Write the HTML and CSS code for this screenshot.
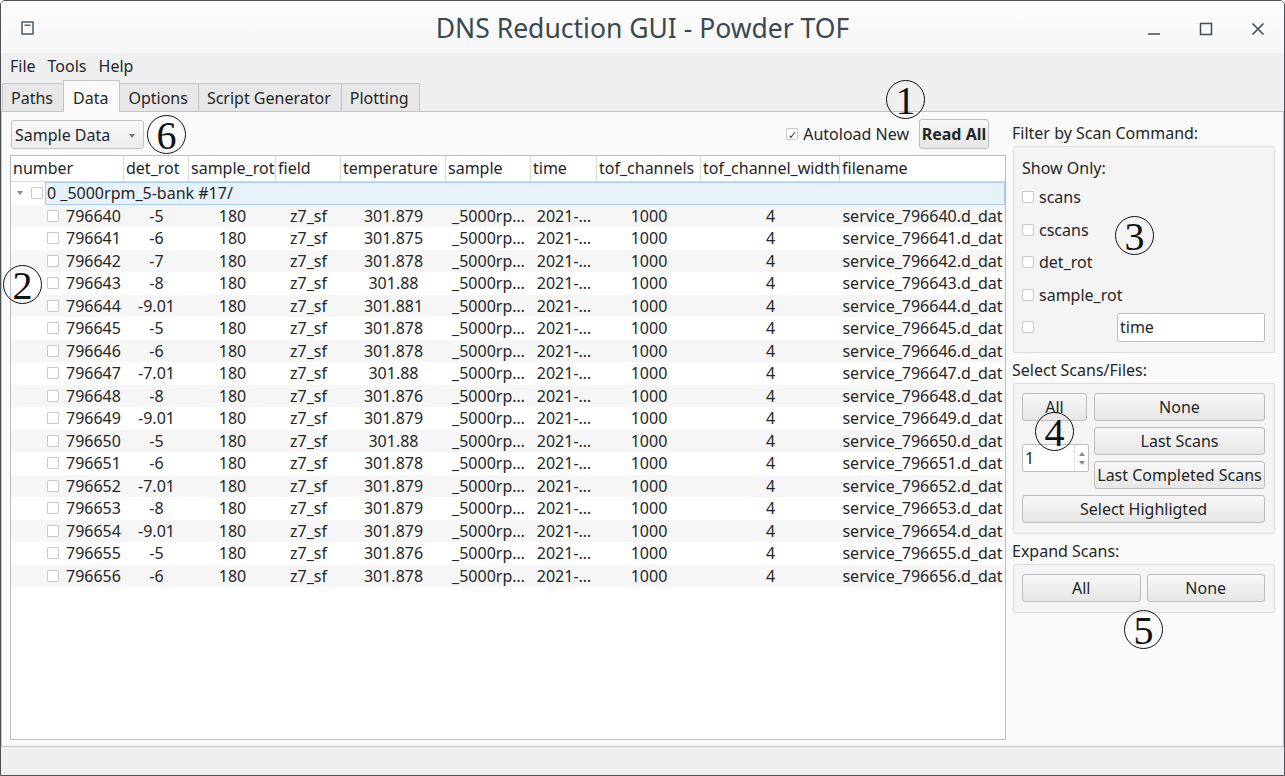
FILE: index.html
```html
<!DOCTYPE html>
<html>
<head>
<meta charset="utf-8">
<title>DNS Reduction GUI - Powder TOF</title>
<link rel="stylesheet" href="styles.css">
</head>
<body>
<div class="window">
  <div class="titlebar">
    <div class="tb-left">
      <svg class="appicon" width="13" height="14" viewBox="0 0 13 14"><rect x="1" y="1" width="11" height="12" fill="#fafafa" stroke="#56656d" stroke-width="1.6"/><line x1="3.5" y1="4.2" x2="9.5" y2="4.2" stroke="#56656d" stroke-width="1.6"/></svg>
    </div>
    <div class="title">DNS Reduction GUI - Powder TOF</div>
    <div class="tb-right">
      <div class="ctl"><svg width="14" height="14" viewBox="0 0 14 14"><line x1="1" y1="12" x2="13" y2="12" stroke="#3e4b53" stroke-width="1.5"/></svg></div>
      <div class="ctl"><svg width="14" height="14" viewBox="0 0 14 14"><rect x="1.5" y="1.5" width="11" height="11" fill="none" stroke="#3e4b53" stroke-width="1.5"/></svg></div>
      <div class="ctl"><svg width="14" height="14" viewBox="0 0 14 14"><path d="M1.5 1.5 L12.5 12.5 M12.5 1.5 L1.5 12.5" stroke="#3e4b53" stroke-width="1.6"/></svg></div>
    </div>
  </div>
  <div class="menubar"><span>File</span><span>Tools</span><span>Help</span></div>
  <div class="tabbar">
    <div class="tab">Paths</div>
    <div class="tab active">Data</div>
    <div class="tab">Options</div>
    <div class="tab">Script Generator</div>
    <div class="tab">Plotting</div>
  </div>
  <div class="pane">
    <div class="left">
      <div class="toolbar">
        <div class="combo">Sample Data<span class="carrow"></span></div>
        <div class="spacer"></div>
        <div class="autoload"><span class="cb checked">✓</span>Autoload New</div>
        <div class="btn readall">Read All</div>
      </div>
      <div class="tree">
        <div class="r hdr">
          <div>number</div><div>det_rot</div><div>sample_rot</div><div>field</div><div>temperature</div><div>sample</div><div>time</div><div>tof_channels</div><div>tof_channel_width</div><div>filename</div>
        </div>
        <div class="grp"><span class="garrow"></span><i class="cb"></i><div class="gsel">0 _5000rpm_5-bank #17/</div></div>
        <div class="r alt"><div class="num"><i class="cb"></i>796640</div><div>-5</div><div>180</div><div>z7_sf</div><div>301.879</div><div>_5000rp…</div><div>2021-…</div><div>1000</div><div>4</div><div>service_796640.d_dat</div></div>
        <div class="r"><div class="num"><i class="cb"></i>796641</div><div>-6</div><div>180</div><div>z7_sf</div><div>301.875</div><div>_5000rp…</div><div>2021-…</div><div>1000</div><div>4</div><div>service_796641.d_dat</div></div>
        <div class="r alt"><div class="num"><i class="cb"></i>796642</div><div>-7</div><div>180</div><div>z7_sf</div><div>301.878</div><div>_5000rp…</div><div>2021-…</div><div>1000</div><div>4</div><div>service_796642.d_dat</div></div>
        <div class="r"><div class="num"><i class="cb"></i>796643</div><div>-8</div><div>180</div><div>z7_sf</div><div>301.88</div><div>_5000rp…</div><div>2021-…</div><div>1000</div><div>4</div><div>service_796643.d_dat</div></div>
        <div class="r alt"><div class="num"><i class="cb"></i>796644</div><div>-9.01</div><div>180</div><div>z7_sf</div><div>301.881</div><div>_5000rp…</div><div>2021-…</div><div>1000</div><div>4</div><div>service_796644.d_dat</div></div>
        <div class="r"><div class="num"><i class="cb"></i>796645</div><div>-5</div><div>180</div><div>z7_sf</div><div>301.878</div><div>_5000rp…</div><div>2021-…</div><div>1000</div><div>4</div><div>service_796645.d_dat</div></div>
        <div class="r alt"><div class="num"><i class="cb"></i>796646</div><div>-6</div><div>180</div><div>z7_sf</div><div>301.878</div><div>_5000rp…</div><div>2021-…</div><div>1000</div><div>4</div><div>service_796646.d_dat</div></div>
        <div class="r"><div class="num"><i class="cb"></i>796647</div><div>-7.01</div><div>180</div><div>z7_sf</div><div>301.88</div><div>_5000rp…</div><div>2021-…</div><div>1000</div><div>4</div><div>service_796647.d_dat</div></div>
        <div class="r alt"><div class="num"><i class="cb"></i>796648</div><div>-8</div><div>180</div><div>z7_sf</div><div>301.876</div><div>_5000rp…</div><div>2021-…</div><div>1000</div><div>4</div><div>service_796648.d_dat</div></div>
        <div class="r"><div class="num"><i class="cb"></i>796649</div><div>-9.01</div><div>180</div><div>z7_sf</div><div>301.879</div><div>_5000rp…</div><div>2021-…</div><div>1000</div><div>4</div><div>service_796649.d_dat</div></div>
        <div class="r alt"><div class="num"><i class="cb"></i>796650</div><div>-5</div><div>180</div><div>z7_sf</div><div>301.88</div><div>_5000rp…</div><div>2021-…</div><div>1000</div><div>4</div><div>service_796650.d_dat</div></div>
        <div class="r"><div class="num"><i class="cb"></i>796651</div><div>-6</div><div>180</div><div>z7_sf</div><div>301.878</div><div>_5000rp…</div><div>2021-…</div><div>1000</div><div>4</div><div>service_796651.d_dat</div></div>
        <div class="r alt"><div class="num"><i class="cb"></i>796652</div><div>-7.01</div><div>180</div><div>z7_sf</div><div>301.879</div><div>_5000rp…</div><div>2021-…</div><div>1000</div><div>4</div><div>service_796652.d_dat</div></div>
        <div class="r"><div class="num"><i class="cb"></i>796653</div><div>-8</div><div>180</div><div>z7_sf</div><div>301.879</div><div>_5000rp…</div><div>2021-…</div><div>1000</div><div>4</div><div>service_796653.d_dat</div></div>
        <div class="r alt"><div class="num"><i class="cb"></i>796654</div><div>-9.01</div><div>180</div><div>z7_sf</div><div>301.879</div><div>_5000rp…</div><div>2021-…</div><div>1000</div><div>4</div><div>service_796654.d_dat</div></div>
        <div class="r"><div class="num"><i class="cb"></i>796655</div><div>-5</div><div>180</div><div>z7_sf</div><div>301.876</div><div>_5000rp…</div><div>2021-…</div><div>1000</div><div>4</div><div>service_796655.d_dat</div></div>
        <div class="r alt"><div class="num"><i class="cb"></i>796656</div><div>-6</div><div>180</div><div>z7_sf</div><div>301.878</div><div>_5000rp…</div><div>2021-…</div><div>1000</div><div>4</div><div>service_796656.d_dat</div></div>
      </div>
    </div>
    <div class="right">
      <div class="rlabel">Filter by Scan Command:</div>
      <div class="group g1">
        <div class="showonly">Show Only:</div>
        <div class="crow"><i class="cb"></i><span>scans</span></div>
        <div class="crow"><i class="cb"></i><span>cscans</span></div>
        <div class="crow"><i class="cb"></i><span>det_rot</span></div>
        <div class="crow"><i class="cb"></i><span>sample_rot</span></div>
        <div class="crow"><i class="cb"></i><div class="ledit">time</div></div>
      </div>
      <div class="rlabel mt">Select Scans/Files:</div>
      <div class="group g2">
        <div class="btn b-all">All</div>
        <div class="btn b-none">None</div>
        <div class="spin"><span class="sval">1</span><span class="sarrows"><i class="up"></i><i class="dn"></i></span></div>
        <div class="btn b-last">Last Scans</div>
        <div class="btn b-lastc">Last Completed Scans</div>
        <div class="btn b-sel">Select Highligted</div>
      </div>
      <div class="rlabel mt">Expand Scans:</div>
      <div class="group g3">
        <div class="btn">All</div>
        <div class="btn">None</div>
      </div>
    </div>
  </div>
  <div class="statusbar"></div>
  <div class="anno a1">1</div>
  <div class="anno a2">2</div>
  <div class="anno a3">3</div>
  <div class="anno a4">4</div>
  <div class="anno a5">5</div>
  <div class="anno a6">6</div>
</div>
</body>
</html>
```
FILE: styles.css
```css
* { box-sizing: border-box; margin: 0; padding: 0; }
body {
  margin: 0;
  background: #ffffff;
  font-family: "Noto Sans", sans-serif;
  font-size: 16px;
  color: #232627;
}
.window {
  position: relative;
  width: 1285px;
  height: 776px;
  border: 1px solid #4d5257;
  border-radius: 5px 5px 0 0;
  display: flex;
  flex-direction: column;
  background: #efefef;
  overflow: hidden;
}
.titlebar {
  height: 52px;
  flex: none;
  display: grid;
  grid-template-columns: 1fr auto 1fr;
  align-items: center;
  background: linear-gradient(#fdfdfd, #f6f6f6);
}
.tb-left { padding-left: 20px; display: flex; align-items: center; }
.appicon { display: block; margin-top: 2px; }
.title {
  font-size: 26.5px;
  color: #394851;
  padding-top: 1px;
}
.tb-right { display: flex; justify-content: flex-end; }
.ctl { width: 52px; height: 52px; display: flex; align-items: center; justify-content: center; padding-top: 4px; }
.ctl svg { display: block; }
.menubar {
  height: 27px;
  flex: none;
  display: flex;
  padding-left: 3px;
  align-items: center;
  background: #efefef;
}
.menubar span { padding: 0 6px; line-height: 27px; }
.tabbar {
  height: 31px;
  flex: none;
  display: flex;
  align-items: flex-end;
  padding-left: 1px;
  background: #efefef;
}
.tab {
  height: 28px;
  padding: 0 10px 0 8px;
  border: 1px solid #c5c5c5;
  border-bottom: none;
  background: #e7e7e7;
  display: flex;
  align-items: center;
  margin-right: -1px;
}
.tab.active {
  height: 32px;
  margin-bottom: -1px;
  background: #fafafa;
  position: relative;
  z-index: 1;
  padding: 2px 11px 0 9px;
}
.pane {
  height: 636px;
  flex: none;
  border: 1px solid #c3c3c3;
  background: #fafafa;
  display: flex;
}
.left {
  width: 1004px;
  flex: none;
  padding: 7px 0 6px 8px;
  display: flex;
  flex-direction: column;
  gap: 6px;
}
.toolbar { height: 30px; display: flex; align-items: center; }
.combo {
  margin-left: 1px;
  width: 133px;
  height: 29px;
  margin-top: 1px;
  border: 1px solid #c2c2c2;
  border-radius: 3px;
  background: linear-gradient(#f9f9f9, #ececec);
  padding-left: 3px;
  display: flex;
  align-items: center;
  position: relative;
}
.carrow {
  position: absolute;
  right: 8px;
  top: 13px;
  border-left: 3px solid transparent;
  border-right: 3px solid transparent;
  border-top: 4px solid #777;
}
.spacer { flex: 1; }
.autoload { display: flex; align-items: center; margin-right: 10px; }
.autoload .cb { margin-right: 5px; }
.cb {
  display: inline-flex;
  width: 12px;
  height: 12px;
  border: 1px solid #c9c9c9;
  background: #fff;
  border-radius: 1px;
  flex: none;
  align-items: center;
  justify-content: center;
  font-size: 11px;
  line-height: 1;
  color: #333;
  font-style: normal;
}
.btn {
  height: 28px;
  border: 1px solid #bdbdbd;
  border-radius: 3px;
  background: linear-gradient(#f7f7f7, #e6e6e6);
  display: flex;
  align-items: center;
  justify-content: center;
  white-space: nowrap;
}
.readall {
  width: 70px;
  height: 30px;
  font-weight: bold;
  margin-right: 17px;
}
.tree {
  height: 585px;
  width: 996px;
  border: 1px solid #bcbcbc;
  background: #fff;
}
.r {
  display: grid;
  grid-template-columns: 113px 65px 87px 65px 105px 85px 66px 104px 139px 165px;
  height: 22.5px;
  align-items: center;
  text-align: center;
  white-space: nowrap;
}
.r.alt { background: #f6f6f6; }
.r.hdr {
  height: 26px;
  text-align: left;
  border-bottom: 1px solid #dadada;
  align-items: stretch;
}
.r.hdr > div {
  border-right: 1px solid #dadada;
  padding-left: 2px;
  padding-bottom: 1px;
  display: flex;
  align-items: center;
  overflow: hidden;
}
.r.hdr > div:last-child { border-right: none; }
.r .num {
  display: flex;
  align-items: center;
  padding-left: 36px;
  text-align: left;
}
.r .num .cb { margin-right: 7px; }
.grp {
  height: 22.5px;
  display: flex;
  align-items: center;
  padding-left: 6px;
}
.garrow {
  width: 0;
  height: 0;
  border-left: 3px solid transparent;
  border-right: 3px solid transparent;
  border-top: 4px solid #888;
  margin-right: 8px;
}
.grp .cb { margin-right: 2px; }
.gsel {
  flex: 1;
  height: 23px;
  border: 1px solid #a9cdec;
  background: #e8f2fb;
  display: flex;
  align-items: center;
  padding-left: 1px;
}
.right {
  flex: 1;
  padding: 8px 8px 0 6px;
  display: flex;
  flex-direction: column;
}
.rlabel { height: 26px; display: flex; align-items: center; }
.rlabel.mt { margin-top: 4px; }
.group {
  margin-left: 1px;
  border: 1px solid #dcdcdc;
  border-radius: 2px;
  background: #f4f4f4;
}
.g1 {
  height: 207px;
  padding: 8px 9px 0 8px;
  display: flex;
  flex-direction: column;
}
.showonly { height: 26px; display: flex; align-items: center; }
.crow { height: 32.5px; display: flex; align-items: center; }
.crow span { margin-left: 5px; }
.ledit {
  margin-left: auto;
  width: 148px;
  height: 29px;
  background: #fff;
  border: 1px solid #bdbdbd;
  border-radius: 2px;
  padding-left: 2px;
  display: flex;
  align-items: center;
}
.g2 {
  height: 151px;
  padding: 9px 9px 9px 8px;
  display: grid;
  grid-template-columns: 67px 1fr;
  grid-template-rows: 28px 28px 28px 28px;
  column-gap: 5px;
  row-gap: 6px;
}
.b-all { grid-row: 1; grid-column: 1; width: 65px; }
.b-none { grid-row: 1; grid-column: 2; }
.b-last { grid-row: 2; grid-column: 2; }
.b-lastc { grid-row: 3; grid-column: 2; }
.b-sel { grid-row: 4; grid-column: 1 / 3; }
.spin {
  grid-row: 2 / 4;
  grid-column: 1;
  align-self: center;
  height: 28px;
  background: #fff;
  border: 1px solid #bdbdbd;
  border-radius: 2px;
  display: flex;
}
.sval { flex: 1; padding-left: 2px; display: flex; align-items: center; }
.sarrows {
  width: 14px;
  border-left: 1px solid #e0e0e0;
  display: flex;
  flex-direction: column;
  align-items: center;
  justify-content: center;
  gap: 5px;
}
.sarrows .up {
  border-left: 3px solid transparent;
  border-right: 3px solid transparent;
  border-bottom: 4px solid #888;
}
.sarrows .dn {
  border-left: 3px solid transparent;
  border-right: 3px solid transparent;
  border-top: 4px solid #888;
}
.g3 {
  height: 49px;
  padding: 9px 9px 0 8px;
  display: flex;
  gap: 6px;
}
.g3 .btn { flex: 1; }
.statusbar { flex: 1; background: #efefef; }
.anno {
  position: absolute;
  width: 39px;
  height: 39px;
  border: 1.5px solid #111;
  border-radius: 50%;
  font-family: "Liberation Serif", serif;
  font-size: 40px;
  line-height: 1;
  color: #111;
  display: flex;
  align-items: center;
  justify-content: center;
  padding-top: 3px;
}
.a1 { left: 885px; top: 79px; }
.a2 { left: 2px; top: 264px; }
.a3 { left: 1114px; top: 215px; }
.a4 { left: 1034px; top: 411px; }
.a5 { left: 1123px; top: 609px; }
.a6 { left: 146px; top: 114px; }
```
